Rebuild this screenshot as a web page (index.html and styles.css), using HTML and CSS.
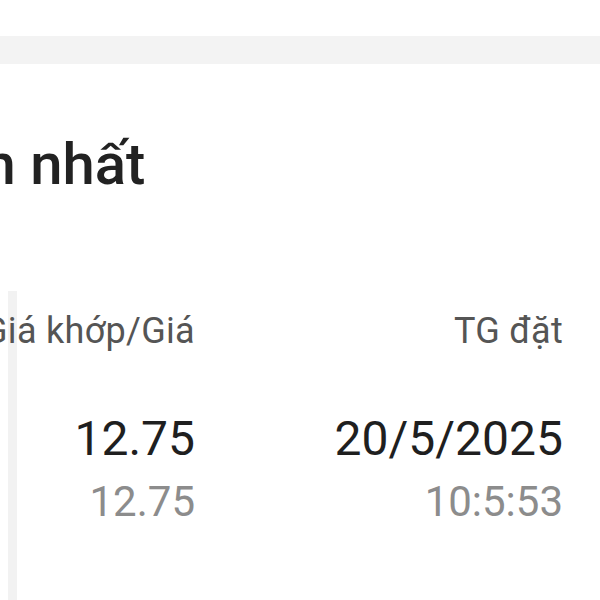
FILE: index.html
```html
<!DOCTYPE html>
<html lang="vi">
<head>
<meta charset="utf-8">
<link rel="stylesheet" href="styles.css">
</head>
<body>
<div class="page">
  <div class="band"></div>
  <h2 class="title">Lệnh gần nhất</h2>
  <div class="table">
    <div class="row head">
      <div class="cell c1"><span>Giá khớp/Giá</span></div>
      <div class="cell c2"><span>TG đặt</span></div>
    </div>
    <div class="row body">
      <div class="cell c1">
        <div class="main">12.75</div>
        <div class="sub">12.75</div>
      </div>
      <div class="cell c2">
        <div class="main">20/5/2025</div>
        <div class="sub">10:5:53</div>
      </div>
    </div>
  </div>
</div>
</body>
</html>
```
FILE: styles.css
```css
html, body {
  margin: 0;
  padding: 0;
  background: #ffffff;
  overflow: hidden;
}
body {
  width: 600px;
  height: 600px;
  font-family: Roboto, "Noto Sans", sans-serif;
  color: #1f1f1f;
}
.page {
  padding-top: 36px;
  height: 564px;
  overflow: hidden;
}
.band {
  height: 28px;
  background: #f3f3f3;
}
.title {
  margin: 68px 0 0 -222px;
  font-size: 58px;
  font-weight: 500;
  line-height: 64px;
  color: #222;
  white-space: nowrap;
}
.table {
  margin-top: 95px;
  background: linear-gradient(#f2f2f2, #f2f2f2) 8px 0 / 9px 100% no-repeat;
  height: 320px;
}
.row {
  display: flex;
}
.cell {
  display: flex;
  flex-direction: column;
  align-items: flex-end;
  flex: none;
  white-space: nowrap;
}
.c1 { width: 195px; }
.c2 { width: 368px; }
.head {
  padding-top: 20px;
  font-size: 36px;
  line-height: 40px;
  letter-spacing: 0.3px;
  color: #555;
}
.body {
  padding-top: 60px;
}
.main {
  font-size: 48px;
  line-height: 56px;
  color: #1f1f1f;
}
.sub {
  margin-top: 10px;
  font-size: 42px;
  line-height: 50px;
  color: #8c8c8c;
}
```
